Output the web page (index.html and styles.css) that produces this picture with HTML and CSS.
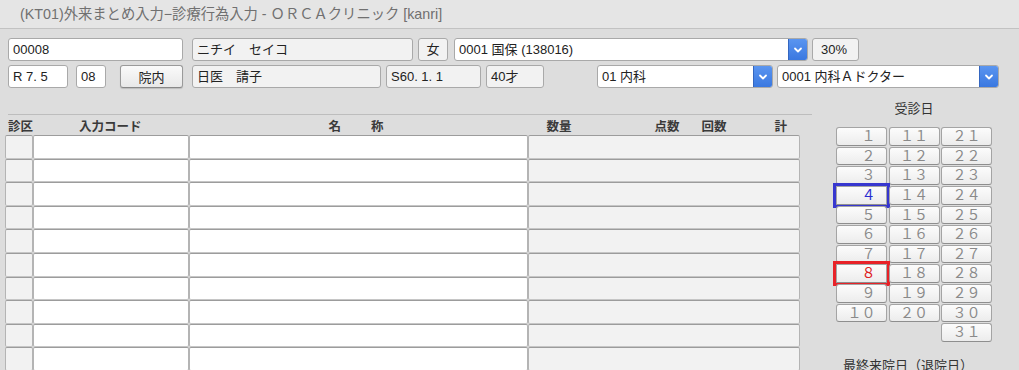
FILE: index.html
```html
<!DOCTYPE html>
<html lang="ja">
<head>
<meta charset="utf-8">
<title>診療行為入力</title>
<link rel="stylesheet" href="styles.css">
</head>
<body>
<div class="titlebar">(KT01)外来まとめ入力−診療行為入力 - ＯＲＣＡクリニック [kanri]</div>
<div class="content">
  <div class="row r1">
    <div class="field white w-id">00008</div>
    <div class="field gray w-kana">ニチイ　セイコ</div>
    <div class="field gray w-sex center">女</div>
    <div class="select w-ins"><span class="sel-text">0001 国保 (138016)</span><span class="sel-btn"><svg width="10" height="8" viewBox="0 0 10 8"><path d="M2 2.5 L5 5.5 L8 2.5" fill="none" stroke="#fff" stroke-width="1.8" stroke-linecap="round" stroke-linejoin="round"/></svg></span></div>
    <div class="field gray w-rate">30%</div>
  </div>
  <div class="row r2">
    <div class="field white w-date">R 7. 5</div>
    <div class="field white w-day">08</div>
    <button class="btn w-btn">院内</button>
    <div class="field gray w-name">日医　請子</div>
    <div class="field gray w-birth">S60. 1. 1</div>
    <div class="field gray w-age">40才</div>
    <div class="select w-dept"><span class="sel-text">01 内科</span><span class="sel-btn"><svg width="10" height="8" viewBox="0 0 10 8"><path d="M2 2.5 L5 5.5 L8 2.5" fill="none" stroke="#fff" stroke-width="1.8" stroke-linecap="round" stroke-linejoin="round"/></svg></span></div>
    <div class="select w-doc"><span class="sel-text">0001 内科Ａドクター</span><span class="sel-btn"><svg width="10" height="8" viewBox="0 0 10 8"><path d="M2 2.5 L5 5.5 L8 2.5" fill="none" stroke="#fff" stroke-width="1.8" stroke-linecap="round" stroke-linejoin="round"/></svg></span></div>
  </div>

  <div class="main">
    <div class="table">
      <div class="thead">
        <span class="h-kubun">診区</span>
        <span class="h-code">入力コード</span>
        <span class="h-mei">名</span>
        <span class="h-sho">称</span>
        <span class="h-qty">数量</span>
        <span class="h-pts">点数</span>
        <span class="h-cnt">回数</span>
        <span class="h-sum">計</span>
      </div>
      <div class="tbody">
        <div class="trow"><div class="cell c-kubun"></div><div class="cell c-code"></div><div class="cell c-name"></div><div class="cell c-val"></div></div>
        <div class="trow"><div class="cell c-kubun"></div><div class="cell c-code"></div><div class="cell c-name"></div><div class="cell c-val"></div></div>
        <div class="trow"><div class="cell c-kubun"></div><div class="cell c-code"></div><div class="cell c-name"></div><div class="cell c-val"></div></div>
        <div class="trow"><div class="cell c-kubun"></div><div class="cell c-code"></div><div class="cell c-name"></div><div class="cell c-val"></div></div>
        <div class="trow"><div class="cell c-kubun"></div><div class="cell c-code"></div><div class="cell c-name"></div><div class="cell c-val"></div></div>
        <div class="trow"><div class="cell c-kubun"></div><div class="cell c-code"></div><div class="cell c-name"></div><div class="cell c-val"></div></div>
        <div class="trow"><div class="cell c-kubun"></div><div class="cell c-code"></div><div class="cell c-name"></div><div class="cell c-val"></div></div>
        <div class="trow"><div class="cell c-kubun"></div><div class="cell c-code"></div><div class="cell c-name"></div><div class="cell c-val"></div></div>
        <div class="trow"><div class="cell c-kubun"></div><div class="cell c-code"></div><div class="cell c-name"></div><div class="cell c-val"></div></div>
        <div class="trow"><div class="cell c-kubun"></div><div class="cell c-code"></div><div class="cell c-name"></div><div class="cell c-val"></div></div>
      </div>
    </div>

    <div class="calendar">
      <div class="cal-title">受診日</div>
      <div class="cal-grid">
        <div class="day">　１</div><div class="day">１１</div><div class="day">２１</div>
        <div class="day">　２</div><div class="day">１２</div><div class="day">２２</div>
        <div class="day">　３</div><div class="day">１３</div><div class="day">２３</div>
        <div class="day sel-blue">　４</div><div class="day">１４</div><div class="day">２４</div>
        <div class="day">　５</div><div class="day">１５</div><div class="day">２５</div>
        <div class="day">　６</div><div class="day">１６</div><div class="day">２６</div>
        <div class="day">　７</div><div class="day">１７</div><div class="day">２７</div>
        <div class="day sel-red">　８</div><div class="day">１８</div><div class="day">２８</div>
        <div class="day">　９</div><div class="day">１９</div><div class="day">２９</div>
        <div class="day">１０</div><div class="day">２０</div><div class="day">３０</div>
        <div class="empty"></div><div class="empty"></div><div class="day">３１</div>
      </div>
      <div class="last-visit">最終来院日（退院日）</div>
    </div>
  </div>
</div>
</body>
</html>
```

FILE: styles.css
```css
* { box-sizing: border-box; }

html, body {
  margin: 0;
  padding: 0;
  background: #dddddd;
  font-family: "Liberation Sans", "Noto Sans CJK JP", sans-serif;
  color: #222;
  overflow: hidden;
}

.titlebar {
  height: 29px;
  background: #e5e5e5;
  border-bottom: 1px solid #c2c2c2;
  color: #707070;
  font-size: 14.3px;
  line-height: 28px;
  padding-left: 20px;
  white-space: nowrap;
}

.content {
  padding-top: 9px;
}

.row {
  display: flex;
  align-items: stretch;
  height: 23px;
  padding-left: 8px;
}

.r2 {
  margin-top: 4px;
}

.field {
  border: 1px solid #a9a9a9;
  border-radius: 3px;
  font-size: 13px;
  line-height: 21px;
  padding-left: 4px;
  white-space: nowrap;
  overflow: hidden;
}

.white { background: #ffffff; }
.gray { background: #f2f2f2; }
.center { text-align: center; padding-left: 0; }

.w-id { width: 175px; }
.w-kana { width: 221px; margin-left: 9px; }
.w-sex { width: 30px; margin-left: 5px; }
.w-ins { width: 354px; margin-left: 6px; }
.w-rate { width: 47px; margin-left: 4px; padding-left: 8px; }

.w-date { width: 60px; }
.w-day { width: 30px; margin-left: 8px; }
.w-btn { width: 63px; margin-left: 14px; }
.w-name { width: 189px; margin-left: 9px; }
.w-birth { width: 95px; margin-left: 5px; }
.w-age { width: 58px; margin-left: 5px; }
.w-dept { width: 176px; margin-left: 53px; }
.w-doc { width: 222px; margin-left: 4px; }

.select {
  display: flex;
  background: #ffffff;
  border: 1px solid #a9a9a9;
  border-radius: 3px;
  font-size: 13px;
  line-height: 21px;
  overflow: hidden;
}

.sel-text {
  flex: 1;
  padding-left: 4px;
  white-space: nowrap;
}

.sel-btn {
  width: 19px;
  display: flex;
  align-items: center;
  justify-content: center;
  background: linear-gradient(#5a95f0, #3a78e0);
  border-left: 1px solid #3466c0;
}

.btn {
  font-family: inherit;
  font-size: 13px;
  color: #222;
  padding: 0;
  border: 1px solid #9a9a9a;
  border-bottom-color: #888;
  border-radius: 3px;
  background: linear-gradient(#fafafa, #e8e8e8);
  box-shadow: 0 1px 1px rgba(0,0,0,0.15);
  height: 23px;
}

/* main area */
.main {
  display: flex;
  align-items: flex-start;
}

.table {
  width: 807px;
  margin-left: 5px;
  margin-top: 26px;
}

.thead {
  margin-left: 3px;
  width: 804px;
  height: 21px;
  border-top: 1px solid #bdbdbd;
  display: flex;
  align-items: center;
  font-size: 12.5px;
  font-weight: 600;
  color: #3a3a3a;
  white-space: nowrap;
}

.h-kubun { margin-left: 0; }
.h-code { margin-left: 46px; }
.h-mei { margin-left: 187px; }
.h-sho { margin-left: 30px; }
.h-qty { margin-left: 163px; }
.h-pts { margin-left: 83px; }
.h-cnt { margin-left: 22px; }
.h-sum { margin-left: 48px; }

.trow {
  display: flex;
  height: 23.6px;
}

.cell {
  height: 100%;
  border: 1px solid #b4b4b4;
  border-top-color: #9c9c9c;
  border-bottom-color: #c6c6c6;
  border-radius: 2px;
}

.c-kubun { width: 28px; background: #f2f2f2; }
.c-code { width: 156px; background: #ffffff; }
.c-name { width: 339px; background: #ffffff; }
.c-val { width: 272px; background: #f2f2f2; }

/* calendar */
.calendar {
  margin-left: 24px;
  margin-top: 13px;
  width: 156px;
}

.cal-title {
  text-align: center;
  font-size: 13px;
  line-height: 16px;
  color: #333;
}

.cal-grid {
  margin-top: 10.3px;
  display: grid;
  grid-template-columns: 51px 51px 51px;
  grid-auto-rows: 18.6px;
  column-gap: 1.5px;
  row-gap: 1px;
}

.day {
  border: 1px solid #a4a4a4;
  border-bottom-color: #8e8e8e;
  border-radius: 3px;
  background: linear-gradient(#fcfcfc, #ececec);
  color: #8a8a8a;
  font-size: 14px;
  line-height: 16px;
  text-align: center;
  white-space: nowrap;
}

.sel-blue {
  border-radius: 0;
  outline: 3px solid #3737cf;
  outline-offset: 0;
  color: #2a2ad0;
}

.sel-red {
  border-radius: 0;
  outline: 3px solid #e82228;
  outline-offset: 0;
  color: #dd2020;
}

.last-visit {
  margin-top: 16px;
  margin-left: 7px;
  font-size: 13px;
  line-height: 16px;
  color: #333;
  white-space: nowrap;
}
```
